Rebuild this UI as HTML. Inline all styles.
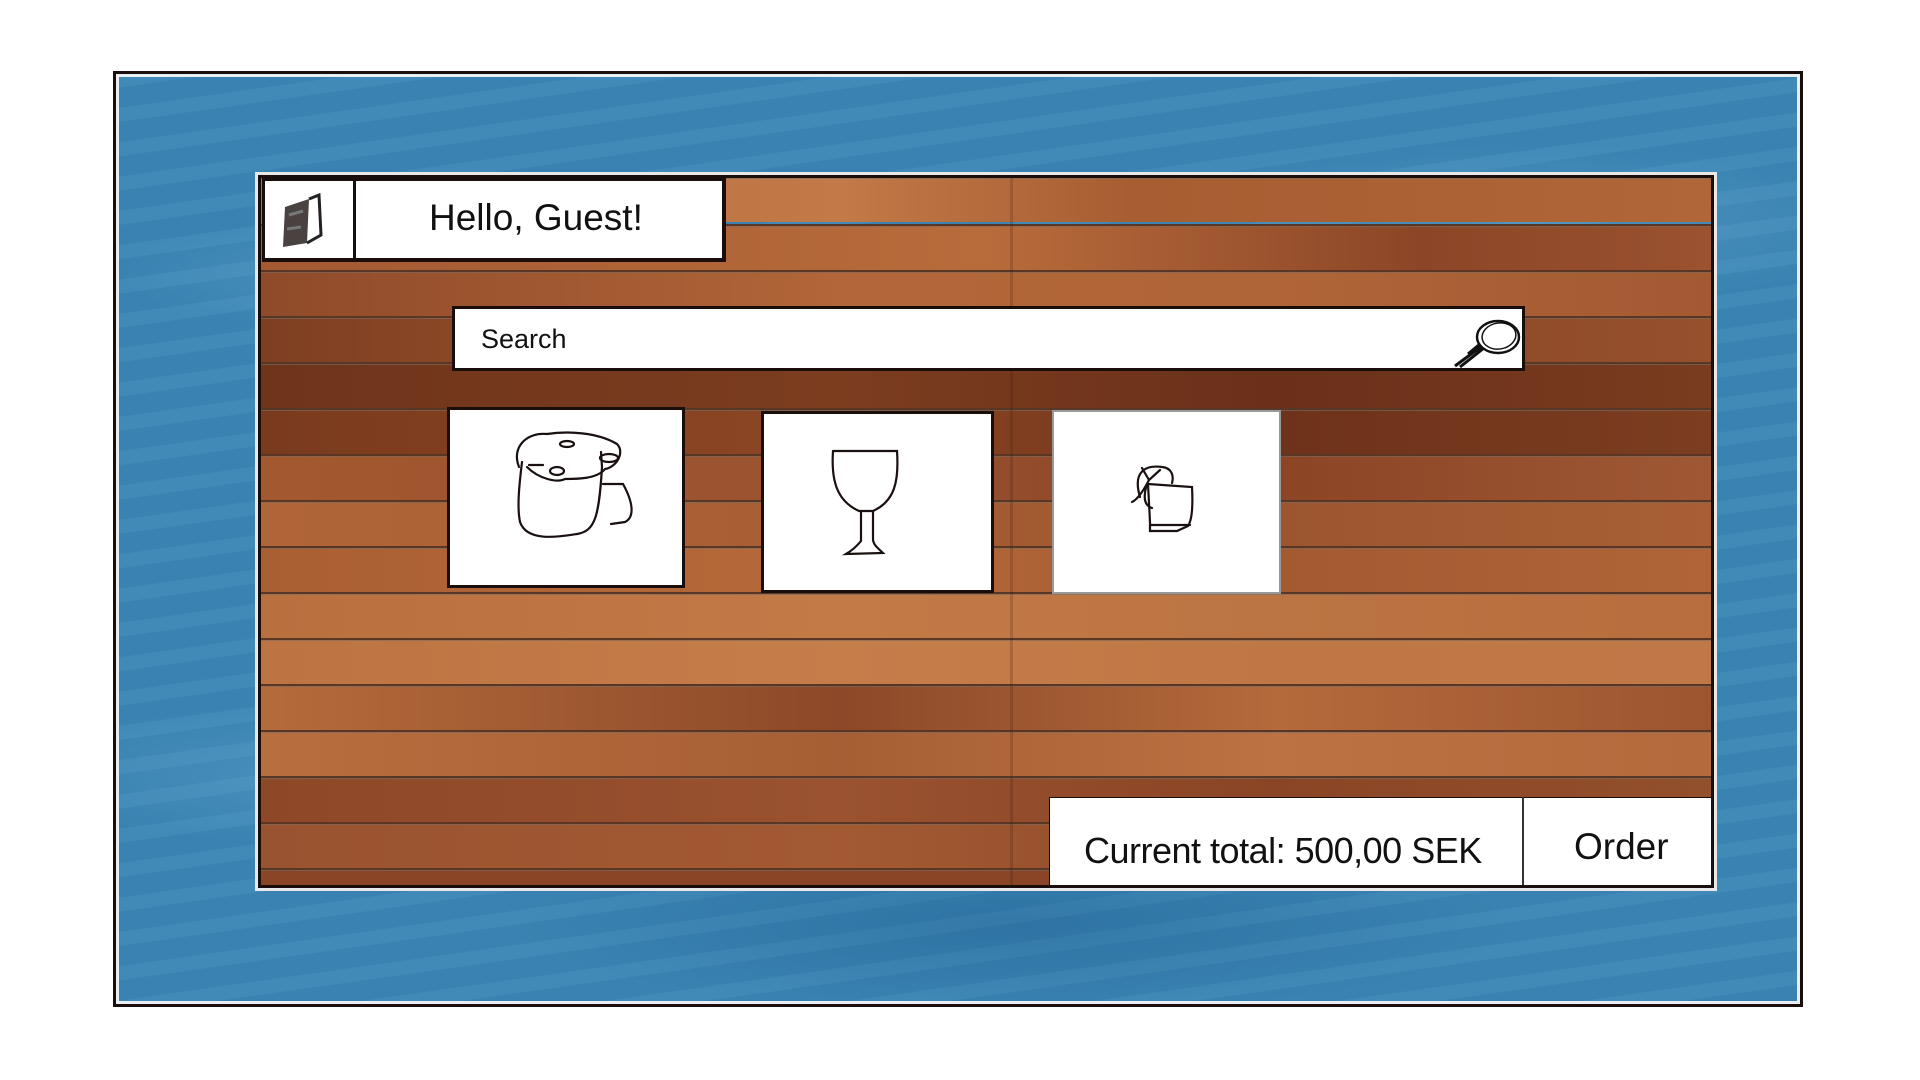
<!DOCTYPE html>
<html><head><meta charset="utf-8"><style>
*{margin:0;padding:0;box-sizing:border-box}
body{width:1920px;height:1080px;background:#fff;position:relative;overflow:hidden;font-family:"Liberation Sans","DejaVu Sans",sans-serif}
.frame{position:absolute;left:113px;top:71px;width:1690px;height:936px;border:3px solid #1a0e0c;
background:
radial-gradient(ellipse 300px 60px at 300px 200px,rgba(120,180,220,.3),transparent),
radial-gradient(ellipse 400px 80px at 1400px 150px,rgba(120,180,220,.3),transparent),
radial-gradient(ellipse 500px 90px at 900px 850px,rgba(20,80,130,.3),transparent),
radial-gradient(ellipse 300px 70px at 200px 700px,rgba(120,180,220,.25),transparent),
repeating-linear-gradient(172deg,rgba(255,255,255,.03) 0 14px,rgba(0,40,80,.04) 14px 34px),
#3b86b5;
box-shadow:inset 0 0 0 3px #e8eef2}
.wood{position:absolute;left:258px;top:175px;width:1456px;height:713px;border:3px solid #1a0e0c;overflow:hidden;box-shadow:0 0 0 3px #e8e8e8}
.plank{position:absolute;left:0;width:100%;height:46px;border-top:2px solid #5a3624;box-shadow:inset 0 1px 0 rgba(120,110,100,.6)}
.half{position:absolute;left:749px;top:0;width:3px;height:100%;background:rgba(60,25,10,.2)}
.box{position:absolute;background:#fff;border:3px solid #1a0e0c}
.txt{position:absolute;color:#111;white-space:nowrap}
</style></head><body>
<div class="frame"></div>
<div class="wood">
<div class="plank" style="top:-2px;background:linear-gradient(90deg,#b6683a,#c27a48 40%,#a85d32 60%,#b06638)"></div>
<div class="plank" style="top:46px;background:linear-gradient(90deg,#a35a31,#b86c3c 50%,#8c4627 80%,#9a5230)"></div>
<div class="plank" style="top:92px;background:linear-gradient(90deg,#8f4a29,#b26639 40%,#b06538 70%,#a35a33)"></div>
<div class="plank" style="top:138px;background:linear-gradient(90deg,#7e3e21,#a35a31 40%,#8a4526 70%,#96502c)"></div>
<div class="plank" style="top:184px;background:linear-gradient(90deg,#6f341b,#7c3d1f 40%,#6a301a 70%,#7a3c1f)"></div>
<div class="plank" style="top:230px;background:linear-gradient(90deg,#7a3a1d,#8d4725 40%,#6e321a 70%,#7c3d20)"></div>
<div class="plank" style="top:276px;background:linear-gradient(90deg,#a4582f,#9a5230 40%,#8b4525 70%,#a05834)"></div>
<div class="plank" style="top:322px;background:linear-gradient(90deg,#b06538,#a75e33 40%,#9c552f 70%,#a85f35)"></div>
<div class="plank" style="top:368px;background:linear-gradient(90deg,#aa5f33,#b66a3a 40%,#a35a31 70%,#b06538)"></div>
<div class="plank" style="top:414px;background:linear-gradient(90deg,#b8703f,#c27a47 40%,#bb7443 70%,#b86e3e)"></div>
<div class="plank" style="top:460px;background:linear-gradient(90deg,#bd7442,#c57d4a 40%,#bf7745 70%,#c07848)"></div>
<div class="plank" style="top:506px;background:linear-gradient(90deg,#b56b3b,#8c4828 40%,#b46a3b 70%,#9d5530)"></div>
<div class="plank" style="top:552px;background:linear-gradient(90deg,#b86f3f,#a65e34 40%,#bb7343 70%,#b36a3c)"></div>
<div class="plank" style="top:598px;background:linear-gradient(90deg,#8e4828,#9a5230 40%,#8a4526 70%,#93502c)"></div>
<div class="plank" style="top:644px;background:linear-gradient(90deg,#9a5330,#a35a33 40%,#8e4a28 70%,#9c5431)"></div>
<div class="plank" style="top:690px;background:#8a4526"></div>
<div class="half"></div>
</div>

<div class="box" style="left:262px;top:178px;width:464px;height:84px;border-width:3px 4px 4px 3px"></div>
<div style="position:absolute;left:353px;top:178px;width:3px;height:84px;background:#1a0e0c"></div>
<svg style="position:absolute;left:275px;top:185px" width="70" height="70" viewBox="0 0 70 70">
<path d="M10 22 L34 14 L32 58 L8 62 Z" fill="#2a2020" opacity=".85"/>
<path d="M34 14 L44 10 L46 50 L32 58" fill="none" stroke="#222" stroke-width="3"/>
<path d="M14 30 L28 26 M12 44 L26 42" stroke="#777" stroke-width="3"/>
</svg>
<div class="txt" style="left:429px;top:197px;font-size:37px">Hello, Guest!</div>

<div class="box" style="left:452px;top:306px;width:1073px;height:65px"></div>
<div class="txt" style="left:481px;top:324px;font-size:27px">Search</div>
<svg style="position:absolute;left:1420px;top:310px" width="105" height="60" viewBox="0 0 105 60">
<ellipse cx="78" cy="27" rx="21" ry="16" fill="none" stroke="#111" stroke-width="2.5"/>
<ellipse cx="79" cy="26" rx="17" ry="13" fill="none" stroke="#111" stroke-width="1.5" transform="rotate(-10 79 26)"/>
<path d="M62 36 L35 56 M64 38 L40 57 M60 34 L48 44" stroke="#111" stroke-width="3"/>
</svg>

<div class="box" style="left:447px;top:407px;width:238px;height:181px"></div>
<svg style="position:absolute;left:447px;top:407px" width="238" height="181" viewBox="0 0 238 181">
<g fill="none" stroke="#1a1010" stroke-width="2.2" stroke-linecap="round">
<path d="M72 60 C64 40 80 25 100 27 C120 24 150 25 170 37 C178 45 170 60 158 62 C150 72 130 72 118 72 C110 76 92 72 80 60"/>
<path d="M75 55 C72 80 70 100 73 115 C80 135 110 130 130 127 C148 124 152 110 155 60 L154 45"/>
<path d="M156 77 L176 77 C186 95 188 110 178 115 L164 117"/>
<ellipse cx="120" cy="37" rx="7" ry="3"/><ellipse cx="162" cy="51" rx="9" ry="4"/><ellipse cx="110" cy="64" rx="7" ry="4"/>
<path d="M82 58 L96 58"/>
</g></svg>

<div class="box" style="left:761px;top:411px;width:233px;height:182px"></div>
<svg style="position:absolute;left:761px;top:411px" width="233" height="182" viewBox="0 0 233 182">
<g fill="none" stroke="#1a1010" stroke-width="2.2" stroke-linecap="round">
<path d="M72 40 L136 40 C138 70 134 90 112 100 L98 100 C76 90 70 70 72 40"/>
<path d="M100 100 L100 130 C96 135 90 140 85 143 L122 142 C118 138 112 134 112 128 L112 100"/>
</g></svg>

<div class="box" style="left:1052px;top:410px;width:229px;height:184px;border-width:2px;border-color:#999"></div>
<svg style="position:absolute;left:1052px;top:410px" width="229" height="184" viewBox="0 0 229 184">
<g fill="none" stroke="#1a1010" stroke-width="2.2" stroke-linecap="round">
<path d="M88 87 C80 60 95 55 110 57 C120 58 122 66 120 73"/>
<path d="M80 92 C85 90 92 80 97 70 L108 60 M97 70 L90 58 M95 74 C90 90 94 96 100 98"/>
<path d="M96 74 L140 77 C141 95 140 110 136 116 L125 121 L98 121 L98 112 Z"/>
<path d="M98 115 L138 115"/>
</g></svg>

<div class="box" style="left:1049px;top:797px;width:665px;height:91px;border-width:1px 3px 3px 1px"></div>
<div style="position:absolute;left:1522px;top:797px;width:2px;height:88px;background:#333"></div>
<div class="txt" style="left:1084px;top:830px;font-size:36px;letter-spacing:-0.5px">Current total: 500,00 SEK</div>
<div class="txt" style="left:1574px;top:826px;font-size:37px">Order</div>
</body></html>
